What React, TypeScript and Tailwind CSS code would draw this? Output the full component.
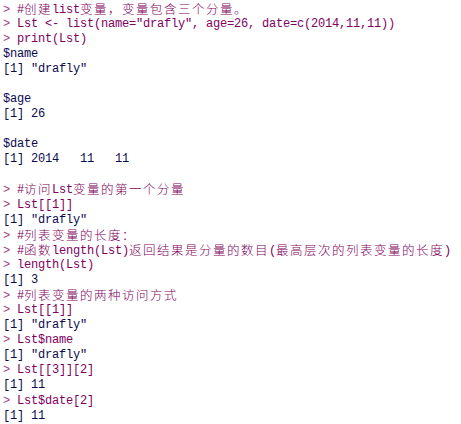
const lines: [string, string][] = [
  ['in', '#创建list变量，变量包含三个分量。'],
  ['in', 'Lst <- list(name="drafly", age=26, date=c(2014,11,11))'],
  ['in', 'print(Lst)'],
  ['out', '$name'],
  ['out', '[1] "drafly"'],
  ['out', ''],
  ['out', '$age'],
  ['out', '[1] 26'],
  ['out', ''],
  ['out', '$date'],
  ['out', '[1] 2014   11   11'],
  ['out', ''],
  ['in', '#访问Lst变量的第一个分量'],
  ['in', 'Lst[[1]]'],
  ['out', '[1] "drafly"'],
  ['in', '#列表变量的长度：'],
  ['in', '#函数length(Lst)返回结果是分量的数目(最高层次的列表变量的长度)'],
  ['in', 'length(Lst)'],
  ['out', '[1] 3'],
  ['in', '#列表变量的两种访问方式'],
  ['in', 'Lst[[1]]'],
  ['out', '[1] "drafly"'],
  ['in', 'Lst$name'],
  ['out', '[1] "drafly"'],
  ['in', 'Lst[[3]][2]'],
  ['out', '[1] 11'],
  ['in', 'Lst$date[2]'],
  ['out', '[1] 11'],
];

const cjk = /[\u3000-\u303f\u4e00-\u9fff\uff00-\uffef]/;

// split a line into latin / CJK runs so the CJK glyphs take two cells
function Mixed({ text }: { text: string }) {
  const runs: { c: boolean; s: string }[] = [];
  for (const ch of text) {
    const c = cjk.test(ch);
    const last = runs[runs.length - 1];
    if (last && last.c === c) last.s += ch;
    else runs.push({ c, s: ch });
  }
  return (
    <>
      {runs.map((r, i) =>
        r.c ? (
          <span
            key={i}
            className="inline-block h-[13px] align-[-1px] font-['Noto_Sans_CJK_SC',sans-serif] text-[12.5px] font-light leading-[13px] tracking-[1.5px]"
          >
            {r.s}
          </span>
        ) : (
          <span key={i}>{r.s}</span>
        )
      )}
    </>
  );
}

export default function App() {
  return (
    <main className="h-screen w-full overflow-hidden bg-white pl-[3px] pt-[1.5px] font-['Liberation_Mono',monospace] text-[12px] tracking-[-0.2px]">
      {lines.map(([kind, text], i) => (
        <div key={i} className="h-[15.08px] whitespace-pre leading-[15.08px]">
          {kind === 'in' ? (
            <span className="text-[#800060]">
              <span className="text-[#a8407a]">{'> '}</span>
              <Mixed text={text} />
            </span>
          ) : (
            <span className="text-[#0a0a50]">{text}</span>
          )}
        </div>
      ))}
    </main>
  );
}
